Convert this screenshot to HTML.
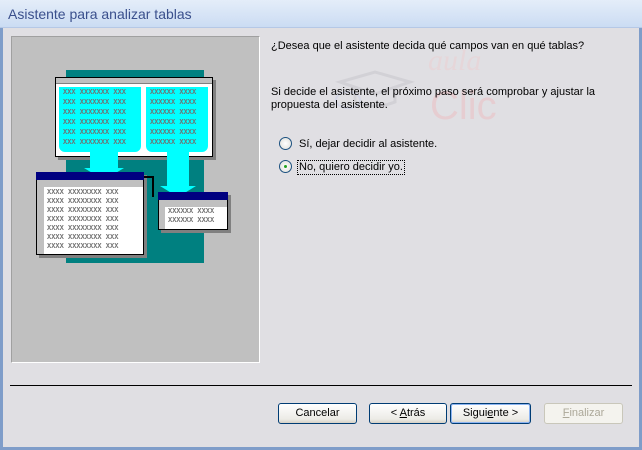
<!DOCTYPE html>
<html><head><meta charset="utf-8"><style>
*{margin:0;padding:0;box-sizing:border-box}
body{width:642px;height:450px;overflow:hidden;background:#e0dfe3;font-family:"Liberation Sans",sans-serif;font-size:11px;color:#000;position:relative}
.a{position:absolute}
#title{left:0;top:0;width:642px;height:28px;background:linear-gradient(#e4edf9,#cbdcf3);border-bottom:1px solid #b5c8e6}
#title span{position:absolute;left:8px;top:6px;font-size:14px;color:#3a4f8c}
.btn{position:absolute;top:403px;height:21px;border:1px solid #003c74;border-radius:3px;background:linear-gradient(#fff,#ecebe6 80%,#d6d0c5);text-align:center;line-height:19px;font-size:11px}
.x{color:#707070;font-size:7px;font-weight:bold;font-family:"Liberation Mono",monospace;line-height:10px;white-space:pre}
.rad{position:absolute;width:13px;height:13px;border-radius:50%;border:1px solid #1c5180;background:radial-gradient(#fff,#dcdcd6)}
</style></head><body>
<div class="a" style="left:0;top:0;width:3px;height:450px;background:#7f9dc9"></div>
<div class="a" style="right:0;top:0;width:3px;height:450px;background:#7f9dc9"></div>
<div class="a" style="left:0;bottom:0;width:642px;height:3px;background:#7f9dc9"></div>
<div id="title" class="a"><span>Asistente para analizar tablas</span></div>

<div class="a" style="left:11px;top:36px;width:249px;height:327px;border:1px solid #fff;border-top-color:#a0a0a0;border-left-color:#a0a0a0;background:#c0c0c0"></div>

<div class="a" style="left:66px;top:70px;width:138px;height:193px;background:#008080"></div>
<div class="a" style="left:58px;top:80px;width:158px;height:80px;background:#808080"></div>
<div class="a" style="left:55px;top:77px;width:158px;height:80px;background:#fff;border:1px solid #000"></div>
<div class="a" style="left:56px;top:78px;width:156px;height:6px;background:#c0c0c0;border-bottom:1px solid #808080"></div>
<div class="a" style="left:59px;top:87px;width:82px;height:65px;background:#0ff;border-radius:0 0 6px 6px"></div>
<div class="a" style="left:146px;top:87px;width:62px;height:65px;background:#0ff;border-radius:0 0 6px 6px"></div>
<div class="a x" style="left:63px;top:88px">XXX XXXXXXX XXX
XXX XXXXXXX XXX
XXX XXXXXXX XXX
XXX XXXXXXX XXX
XXX XXXXXXX XXX
XXX XXXXXXX XXX</div>
<div class="a x" style="left:150px;top:88px">XXXXXX XXXX
XXXXXX XXXX
XXXXXX XXXX
XXXXXX XXXX
XXXXXX XXXX
XXXXXX XXXX</div>
<div class="a" style="left:90px;top:152px;width:28px;height:18px;background:#0ff"></div>
<div class="a" style="left:84px;top:168px;width:0;height:0;border-left:20px solid transparent;border-right:20px solid transparent;border-top:12px solid #0ff"></div>
<div class="a" style="left:167px;top:152px;width:22px;height:34px;background:#0ff"></div>
<div class="a" style="left:160px;top:186px;width:0;height:0;border-left:18px solid transparent;border-right:18px solid transparent;border-top:11px solid #0ff"></div>
<div class="a" style="left:39px;top:175px;width:108px;height:83px;background:#808080"></div>
<div class="a" style="left:36px;top:172px;width:108px;height:83px;background:#fff;border:1px solid #000"></div>
<div class="a" style="left:36px;top:172px;width:108px;height:8px;background:#000080"></div>
<div class="a" style="left:37px;top:180px;width:106px;height:7px;background:#c0c0c0"></div>
<div class="a" style="left:37px;top:187px;width:7px;height:67px;background:#c0c0c0"></div>
<div class="a x" style="left:47px;top:189px;line-height:9px">XXXX XXXXXXXX XXX
XXXX XXXXXXXX XXX
XXXX XXXXXXXX XXX
XXXX XXXXXXXX XXX
XXXX XXXXXXXX XXX
XXXX XXXXXXXX XXX
XXXX XXXXXXXX XXX</div>
<div class="a" style="left:144px;top:176px;width:10px;height:2px;background:#000"></div>
<div class="a" style="left:152px;top:176px;width:2px;height:21px;background:#000"></div>
<div class="a" style="left:161px;top:195px;width:70px;height:38px;background:#808080"></div>
<div class="a" style="left:158px;top:192px;width:70px;height:38px;background:#fff;border:1px solid #000"></div>
<div class="a" style="left:158px;top:192px;width:70px;height:8px;background:#000080"></div>
<div class="a" style="left:159px;top:200px;width:68px;height:7px;background:#c0c0c0"></div>
<div class="a" style="left:159px;top:207px;width:6px;height:22px;background:#c0c0c0"></div>
<div class="a x" style="left:168px;top:208px;line-height:9px">XXXXXX XXXX
XXXXXX XXXX</div>

<svg class="a" style="left:300px;top:60px" width="130" height="60"><path d="M40 22 L75 12 L110 22 L75 34 Z M55 28 L55 42 Q75 50 95 42 L95 28" fill="none" stroke="#d2d1d6" stroke-width="3"/><ellipse cx="48" cy="40" rx="12" ry="8" fill="none" stroke="#d4d6e4" stroke-width="2"/></svg>
<div class="a" style="left:428px;top:44px;font-size:30px;font-style:italic;color:#e6d6d9;font-family:'Liberation Serif',serif">aula</div>
<div class="a" style="left:430px;top:84px;font-size:40px;color:#e6cdd1">Clic</div>

<div class="a" style="left:271px;top:40px">¿Desea que el asistente decida qué campos van en qué tablas?</div>
<div class="a" style="left:271px;top:86px;width:330px;line-height:13px">Si decide el asistente, el próximo paso será comprobar y ajustar la propuesta del asistente.</div>
<div class="rad" style="left:279px;top:137px"></div>
<div class="a" style="left:299px;top:138px">Sí, dejar decidir al asistente.</div>
<div class="rad" style="left:279px;top:160px"><div class="a" style="left:4px;top:4px;width:3px;height:3px;border-radius:50%;background:#21a121"></div></div>
<div class="a" style="left:297px;top:160px;border:1px dotted #000;padding:0 1px;line-height:13px">No, quiero decidir yo.</div>

<div class="a" style="left:10px;top:385px;width:622px;height:1px;background:#000"></div>
<div class="btn" style="left:278px;width:79px">Cancelar</div>
<div class="btn" style="left:369px;width:78px">&lt; <u>A</u>trás</div>
<div class="btn" style="left:450px;width:81px;box-shadow:inset 0 0 0 1px #8cb4f2">Sigui<u>e</u>nte &gt;</div>
<div class="btn" style="left:544px;width:79px;border-color:#c9c7ba;background:#f4f3ee;color:#aca899"><u>F</u>inalizar</div>
</body></html>
